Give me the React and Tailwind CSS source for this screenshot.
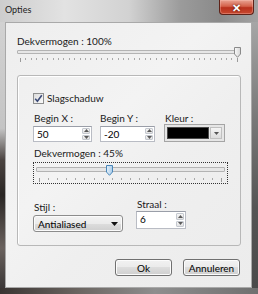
import React from "react";

function Ticks({ count, className }) {
  return (
    <div className={"flex justify-between " + className}>
      {Array.from({ length: count }).map((_, i) => (
        <div
          key={i}
          className={
            i === 0 || i === count - 1
              ? "w-px h-[4px] bg-[#9a9a9a]"
              : "w-px h-[2px] bg-[#a8a8a8]"
          }
        />
      ))}
    </div>
  );
}

function Thumb({ focused }) {
  return (
    <svg width="7" height="11" viewBox="0 0 7 11">
      <defs>
        <linearGradient id={focused ? "tf" : "tn"} x1="0" y1="0" x2="1" y2="0">
          <stop offset="0" stopColor={focused ? "#e4f1fb" : "#fbfbfb"} />
          <stop offset="1" stopColor={focused ? "#a9cbe8" : "#d4d4d4"} />
        </linearGradient>
      </defs>
      <path
        d="M0.5 0.5 H6.5 V7 L3.5 10.3 L0.5 7 Z"
        fill={`url(#${focused ? "tf" : "tn"})`}
        stroke={focused ? "#4a86b8" : "#8a8a8a"}
        strokeWidth="1"
      />
    </svg>
  );
}

function Spin({ value, w }) {
  return (
    <div
      className={
        "flex h-[16px] bg-white border border-[#b9bcc4] border-t-[#9a9ea8] " + w
      }
    >
      <div className="flex-1 pl-[3px] leading-[14px] text-[10px] text-black">
        {value}
      </div>
      <div className="w-[9px] flex flex-col gap-px py-[1px] pr-[1px]">
        <div className="flex-1 rounded-[1px] border border-[#c4c8cf] bg-[linear-gradient(#f6f6f6,#e2e2e2)] flex items-center justify-center">
          <svg width="5" height="3" viewBox="0 0 5 3">
            <path d="M0 3 L2.5 0 L5 3 Z" fill="#5a5a5a" />
          </svg>
        </div>
        <div className="flex-1 rounded-[1px] border border-[#c4c8cf] bg-[linear-gradient(#f6f6f6,#e2e2e2)] flex items-center justify-center">
          <svg width="5" height="3" viewBox="0 0 5 3">
            <path d="M0 0 L2.5 3 L5 0 Z" fill="#5a5a5a" />
          </svg>
        </div>
      </div>
    </div>
  );
}

export default function App() {
  return (
    <div className="w-[258px] h-[294px] overflow-hidden flex flex-col font-['Lato','Noto_Sans',sans-serif] text-[#1a1a1a] bg-[#8a8582]">
      {/* title bar */}
      <div className="h-[22px] flex items-start bg-[linear-gradient(to_right,#cdcdcd_0%,#e2e2e2_25%,#d2d2d2_50%,#9b9b9b_70%,#8a8a8a_85%,#a2a2a2_100%)]">
        <div className="pl-[5px] pt-[4px] text-[9px] leading-[11px] text-[#1c1c1c]">
          Opties
        </div>
        <div className="ml-auto mr-[4px] w-[35px] h-[15px] rounded-b-[4px] border border-t-0 border-[#5e2218] bg-[linear-gradient(#e9a392_0%,#d4614a_45%,#b8301c_55%,#c84a30_100%)] flex items-center justify-center shadow-[inset_0_0_0_1px_rgba(255,200,190,0.35)]">
          <span className="text-white text-[11px] font-bold leading-[11px] [text-shadow:0_0_2px_#3a0a04]">
            ✕
          </span>
        </div>
      </div>

      <div className="flex flex-1">
        {/* left frame */}
        <div className="w-[5px] bg-[linear-gradient(#d2d2d2_0%,#c4c4c4_40%,#4a4340_52%,#2a2624_65%,#6a625e_85%,#3c3838_100%)]" />

        {/* client area */}
        <div className="w-[247px] h-[266px] border border-[#a9a9a9] bg-[linear-gradient(135deg,#eeeeee_0%,#f3f3f3_40%,#efefef_60%,#ececec_100%)] flex flex-col pl-[11px]">
          <div className="mt-[12px] text-[10px] leading-[12px]">
            Dekvermogen : 100%
          </div>

          {/* slider 1 */}
          <div className="relative w-[224px] h-[14px] mt-[3px]">
            <div className="h-[4px] border border-[#b3b3b3] bg-[#e6e6e6] rounded-[1px]" />
            <Ticks count={41} className="mt-[4px] px-[3px] items-start" />
            <div className="absolute right-[0px] top-[-3px]">
              <Thumb />
            </div>
          </div>

          {/* group box */}
          <div className="mt-[11px] w-[224px] h-[171px] border border-[#b8b8b8] rounded-[3px] shadow-[inset_1px_1px_0_#ffffff] flex flex-col pl-[15px] pt-[16px]">
            <div className="flex items-center h-[12px]">
              <div className="w-[11px] h-[11px] border border-[#8e8f8f] bg-[linear-gradient(135deg,#dcdcdc,#fafafa)] flex items-center justify-center">
                <svg width="9" height="9" viewBox="0 0 9 9">
                  <path
                    d="M1.2 4.8 L3.4 7.2 L7.8 1.2"
                    fill="none"
                    stroke="#3b4a77"
                    strokeWidth="1.6"
                  />
                </svg>
              </div>
              <span className="ml-[3px] text-[10px] leading-[12px]">
                Slagschaduw
              </span>
            </div>

            <div className="mt-[8px] flex">
              <div className="flex flex-col w-[59px]">
                <div className="pl-[1px] text-[10px] leading-[12px]">Begin X :</div>
                <div className="mt-[2px]">
                  <Spin value="50" w="w-[59px]" />
                </div>
              </div>
              <div className="ml-[8px] flex flex-col w-[55px]">
                <div className="text-[10px] leading-[12px]">Begin Y :</div>
                <div className="mt-[2px]">
                  <Spin value="-20" w="w-[55px]" />
                </div>
              </div>
              <div className="ml-[9px] flex flex-col">
                <div className="pl-[1px] text-[10px] leading-[12px]">Kleur :</div>
                <div className="mt-[0px] w-[61px] h-[18px] border border-[#a5a5a5] bg-[#e6e6e6] flex items-stretch p-[2px] gap-[1px]">
                  <div className="flex-1 bg-black border border-[#4a4a4a]" />
                  <div className="w-[12px] border border-[#c0c0c0] bg-[linear-gradient(#f5f5f5,#dcdcdc)] flex items-center justify-center">
                    <svg width="5" height="3" viewBox="0 0 5 3">
                      <path d="M0 0 L2.5 3 L5 0 Z" fill="#555" />
                    </svg>
                  </div>
                </div>
              </div>
            </div>

            <div className="mt-[5px] text-[10px] leading-[12px] pl-[1px]">
              Dekvermogen : 45%
            </div>

            {/* slider 2 with focus rect */}
            <div className="mt-[3px] w-[195px] h-[22px] border border-dotted border-[#333] relative px-[2px] pt-[4px]">
              <div className="h-[5px] border border-[#b3b3b3] bg-[#e6e6e6] rounded-[1px]" />
              <Ticks count={21} className="mt-[6px] px-[3px] items-start" />
              <div className="absolute left-[72px] top-[2px]">
                <Thumb focused />
              </div>
            </div>

            <div className="flex">
              <div className="flex flex-col mt-[17px]">
                <div className="pl-[1px] text-[10px] leading-[12px]">Stijl :</div>
                <div className="mt-[2px] w-[90px] h-[17px] rounded-[3px] border border-[#8c8c8c] bg-[linear-gradient(#f3f3f3_0%,#ebebeb_50%,#dddddd_51%,#cfcfcf_100%)] flex items-center pl-[4px] pr-[4px] shadow-[inset_0_0_0_1px_#fbfbfb]">
                  <span className="text-[10px] leading-[12px] text-black">
                    Antialiased
                  </span>
                  <svg className="ml-auto" width="7" height="4" viewBox="0 0 7 4">
                    <path d="M0 0 L3.5 4 L7 0 Z" fill="#111" />
                  </svg>
                </div>
              </div>
              <div className="ml-[13px] flex flex-col mt-[14px]">
                <div className="pl-[1px] text-[10px] leading-[12px]">Straal :</div>
                <div className="mt-[1px]">
                  <Spin value="6" w="w-[50px] h-[18px]" />
                </div>
              </div>
            </div>
          </div>

          {/* buttons */}
          <div className="mt-[13px] flex justify-end pr-[11px] gap-[11px]">
            {["Ok", "Annuleren"].map((t) => (
              <div
                key={t}
                className="w-[57px] h-[17px] rounded-[3px] border border-[#707070] bg-[linear-gradient(#f2f2f2_0%,#ebebeb_45%,#dddddd_50%,#cfcfcf_100%)] shadow-[inset_0_0_0_1px_#fcfcfc] flex items-center justify-center text-[10px] leading-[12px] text-black"
              >
                {t}
              </div>
            ))}
          </div>
        </div>

        {/* right frame */}
        <div className="w-[6px] bg-[linear-gradient(#a6a6a6_0%,#7a7a7a_35%,#555_70%,#4a4a4a_100%)]" />
      </div>
      <div className="h-[6px] bg-[linear-gradient(to_right,#3a3432_0%,#6a6460_30%,#8e8e8e_60%,#707070_100%)]" />
    </div>
  );
}
